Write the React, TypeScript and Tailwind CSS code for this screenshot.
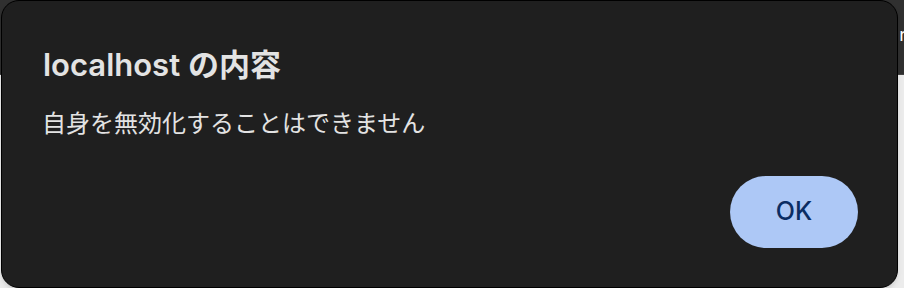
import React from 'react';

const FONT = { fontFamily: '"Inter", "Noto Sans CJK JP", sans-serif' };

export default function App() {
  return (
    <div className="relative w-[904px] h-[288px] overflow-hidden bg-[#ececec]" style={FONT}>
      {/* page behind the dialog */}
      <div className="h-[75px] bg-[#303030] border-b border-[#444] flex justify-end">
        <span className="text-white text-[18px] leading-none mt-[26px] mr-[-6px]">n</span>
      </div>

      {/* alert dialog */}
      <div className="absolute left-[1px] top-0 w-[897px] h-[288px] bg-[#1f1f1f] border border-black rounded-[18px] flex flex-col shadow-md">
        <h1 className="pt-[46px] pl-[41px] text-[31px] leading-[36px] font-semibold text-[#e3e3e3]">
          localhost の内容
        </h1>
        <p className="mt-[25px] pl-[40px] text-[24px] leading-[32px] text-[#e3e3e3]">
          自身を無効化することはできません
        </p>
        <div className="mt-auto flex justify-end pr-[39px] pb-[39px]">
          <button className="w-[128px] h-[72px] rounded-full bg-[#adc8f6] text-[#0b2d63] text-[25px] font-medium">
            OK
          </button>
        </div>
      </div>
    </div>
  );
}
